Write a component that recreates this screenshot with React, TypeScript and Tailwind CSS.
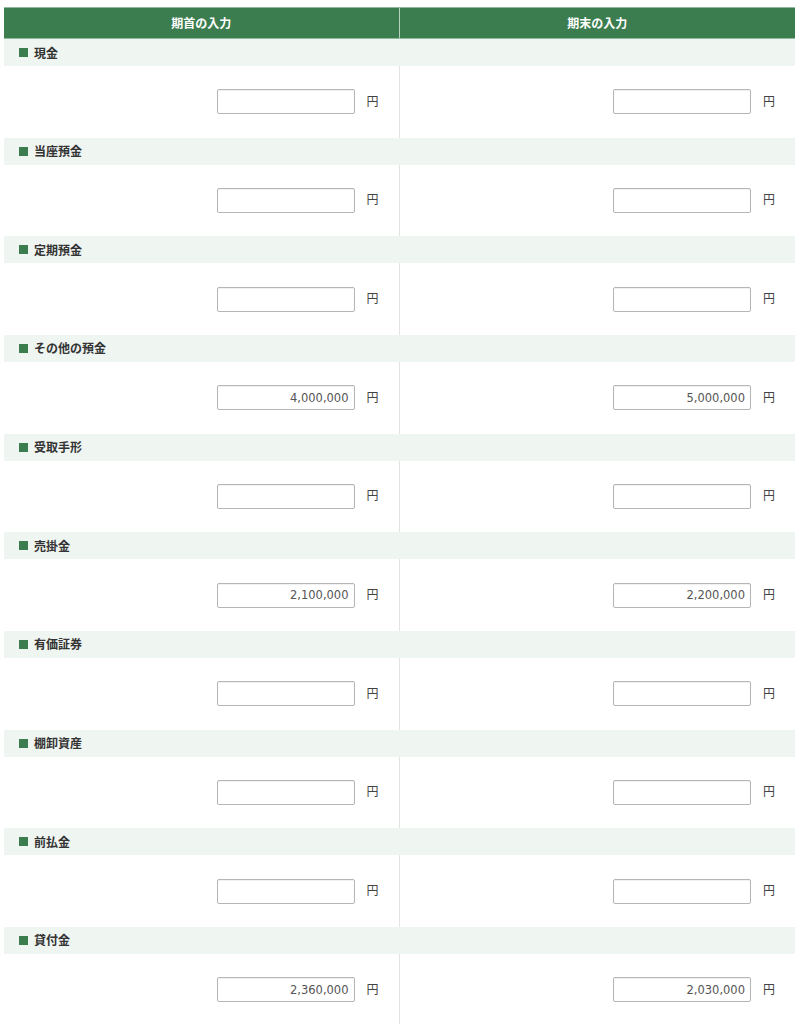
import React from "react";

const items: { label: string; start: string; end: string }[] = [
  { label: "現金", start: "", end: "" },
  { label: "当座預金", start: "", end: "" },
  { label: "定期預金", start: "", end: "" },
  { label: "その他の預金", start: "4,000,000", end: "5,000,000" },
  { label: "受取手形", start: "", end: "" },
  { label: "売掛金", start: "2,100,000", end: "2,200,000" },
  { label: "有価証券", start: "", end: "" },
  { label: "棚卸資産", start: "", end: "" },
  { label: "前払金", start: "", end: "" },
  { label: "貸付金", start: "2,360,000", end: "2,030,000" },
];

const jp = { fontFamily: '"Noto Sans CJK JP", "Noto Sans", sans-serif' };

function Field({ value }: { value: string }) {
  return (
    <div className="flex items-center justify-end pr-[20px]">
      <input
        readOnly
        value={value}
        className="w-[138px] h-[25px] border border-[#b5b5b5] rounded-[2px] bg-white px-[5px] text-right text-[11.5px] text-[#555] outline-none shadow-[inset_0_1px_1px_rgba(0,0,0,0.06)]"
        style={{ fontFamily: '"DejaVu Sans", Verdana, sans-serif' }}
      />
      <span className="ml-[12px] w-[12px] text-[12px] leading-none text-[#444] -translate-y-[1px]" style={jp}>
        円
      </span>
    </div>
  );
}

export default function App() {
  return (
    <div className="w-[800px] bg-white pt-[7px] pl-[4px] pr-[5px]" style={jp}>
      <div className="grid grid-cols-2 h-[32px] bg-[#3b7d4f] border-y border-[#8fbb9c]">
        <div className="flex items-center justify-center border-r border-[#b7d3c0] text-white text-[12px] font-bold">
          期首の入力
        </div>
        <div className="flex items-center justify-center text-white text-[12px] font-bold">
          期末の入力
        </div>
      </div>
      {items.map((it) => (
        <div key={it.label}>
          <div className="h-[27px] bg-[#eff5f1] flex items-center pl-[15px]">
            <span className="w-[9px] h-[9px] bg-[#3b7d4f] mr-[6px]" />
            <span className="text-[12px] font-bold text-[#333]">{it.label}</span>
          </div>
          <div className="grid grid-cols-2 h-[71.67px]">
            <div className="flex items-center justify-end border-r border-[#e3e3e3]">
              <Field value={it.start} />
            </div>
            <div className="flex items-center justify-end">
              <Field value={it.end} />
            </div>
          </div>
        </div>
      ))}
    </div>
  );
}
